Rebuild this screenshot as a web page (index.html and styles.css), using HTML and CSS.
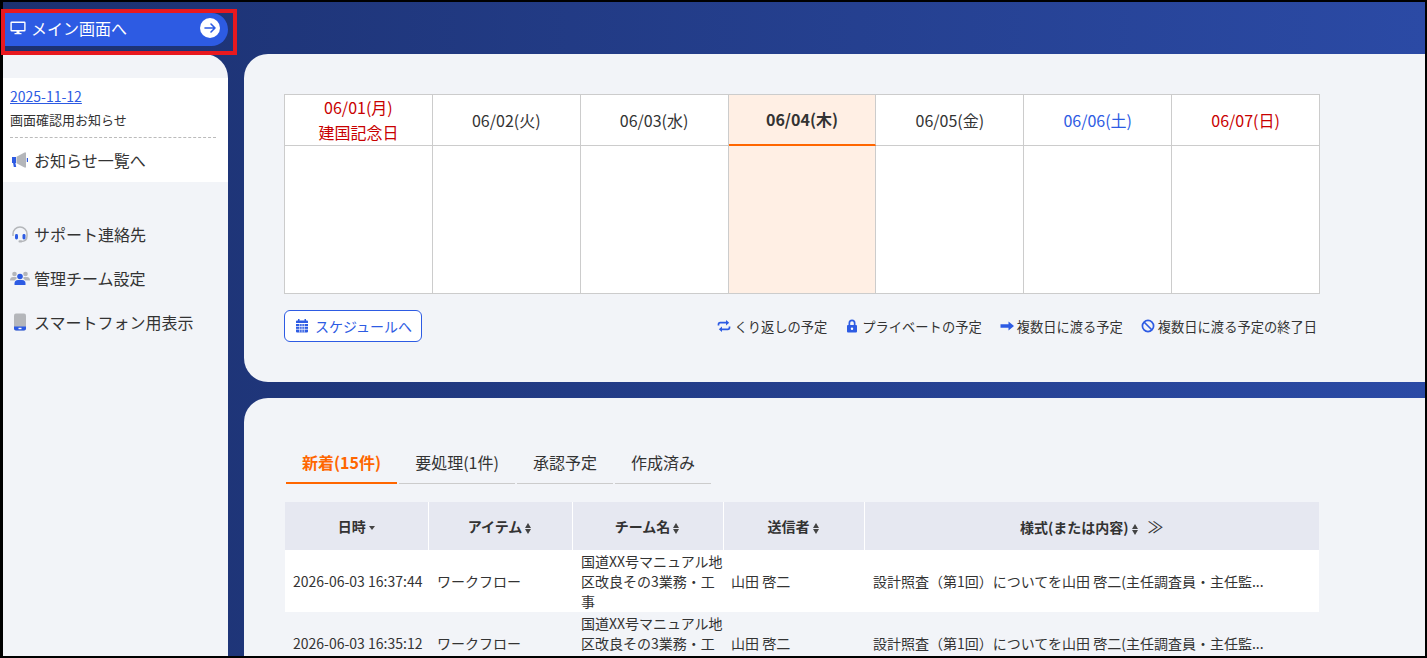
FILE: index.html
```html
<!DOCTYPE html>
<html lang="ja">
<head>
    <meta charset="UTF-8">
    <meta name="viewport" content="width=device-width, initial-scale=1.0">
    <title>メイン画面</title>
    <link rel="stylesheet" href="styles.css">
</head>
<body>
    <div class="page">
        <header class="topbar">
            <a class="main-link" href="#">
                <svg class="main-icon" viewBox="0 0 16 16"><path fill="none" stroke="#fff" stroke-width="1.4" d="M1.7 2.200h12.600a.6.6 0 0 1 .6.6v7.400a.6.6 0 0 1-.6.6H1.700a.6.6 0 0 1-.6-.6V2.800a.6.6 0 0 1 .6-.6z"/><path fill="#fff" d="M6.500 11h3v2h2v1.200h-7V13h2z"/></svg>
                <span class="main-text">メイン画面へ</span>
                <span class="main-arrow">
                    <svg viewBox="0 0 20 20"><path fill="none" stroke="#2d5be3" stroke-width="1.6" stroke-linecap="round" stroke-linejoin="round" d="M5 10h10M11 6l4 4-4 4"/></svg>
                </span>
            </a>
            <div class="highlight"></div>
        </header>
        <div class="content">
            <aside class="sidebar">
                <div class="notice-box">
                    <a class="notice-date" href="#">2025-11-12</a>
                    <p class="notice-title">画面確認用お知らせ</p>
                    <a class="notice-all" href="#">
                        <svg class="side-icon" viewBox="0 0 20 20"><path fill="#2d5be3" d="M2 7h4v6H5.400l.8 4H3.800l-.7-4H2z"/><path fill="#b4b6ba" d="M6.500 6.800 14.500 2.500h1.500v15h-1.500l-8-4.300z"/><path fill="#2d5be3" d="M16.800 8H18v4h-1.200z"/></svg>
                        <span>お知らせ一覧へ</span>
                    </a>
                </div>
                <ul class="side-menu">
                    <li class="side-item">
                        <svg class="side-icon" viewBox="0 0 20 20"><path fill="none" stroke="#b4b6ba" stroke-width="1.500" d="M3 12V10a7 7 0 0 1 14 0v2M17 12q0 5.500-6 5.500"/><rect x="5" y="10" width="3" height="5.500" rx="1.400" fill="#2d5be3"/><rect x="12.500" y="10" width="3" height="5.500" rx="1.400" fill="#2d5be3"/><rect x="8.500" y="16.300" width="3.500" height="2.200" rx="1" fill="#b4b6ba"/></svg>
                        <span>サポート連絡先</span>
                    </li>
                    <li class="side-item">
                        <svg class="side-icon" viewBox="0 0 20 20"><circle cx="4.500" cy="6" r="2.300" fill="#b4b6ba"/><circle cx="15.500" cy="6" r="2.300" fill="#b4b6ba"/><path fill="#b4b6ba" d="M0 12.500q0-3.500 3-3.500h3l1 1-2.500 2.500zM20 12.500q0-3.500-3-3.500h-3l-1 1 2.500 2.500z"/><circle cx="10" cy="8.500" r="2.800" fill="#2d5be3"/><path fill="#2d5be3" d="M4.500 17v-1.500q0-3.500 3.500-3.500h4q3.500 0 3.500 3.500V17z"/></svg>
                        <span>管理チーム設定</span>
                    </li>
                    <li class="side-item">
                        <svg class="side-icon" viewBox="0 0 20 20"><rect x="4" y="1.500" width="12" height="17" rx="2" fill="#b4b6ba"/><path fill="#2d5be3" d="M4 14.500h12v2a2 2 0 0 1-2 2H6a2 2 0 0 1-2-2z"/><rect x="8.500" y="15.800" width="3" height="1.400" fill="#fff"/></svg>
                        <span>スマートフォン用表示</span>
                    </li>
                </ul>
            </aside>
            <main class="main">
                <section class="panel panel-schedule">
                    <div class="week">
                        <div class="day-head holiday"><span>06/01(月)</span><span>建国記念日</span></div>
                        <div class="day-head">06/02(火)</div>
                        <div class="day-head">06/03(水)</div>
                        <div class="day-head today">06/04(木)</div>
                        <div class="day-head">06/05(金)</div>
                        <div class="day-head sat">06/06(土)</div>
                        <div class="day-head sun">06/07(日)</div>
                        <div class="day-cell"></div>
                        <div class="day-cell"></div>
                        <div class="day-cell"></div>
                        <div class="day-cell today-cell"></div>
                        <div class="day-cell"></div>
                        <div class="day-cell"></div>
                        <div class="day-cell"></div>
                    </div>
                    <div class="schedule-foot">
                        <a class="schedule-btn" href="#">
                            <svg class="btn-icon" viewBox="0 0 14 14"><path fill="#2d5be3" d="M3 0h1.500v1.500h5V0H11v1.500h1q1 0 1 1V4H1V2.500q0-1 1-1h1zM1 5h12v7.500q0 1-1 1H2q-1 0-1-1z"/><path stroke="#fff" stroke-width=".7" d="M1 7.500h12M1 10.300h12M4.700 5v8.500M7 5v8.500M9.300 5v8.500"/></svg>
                            <span>スケジュールへ</span>
                        </a>
                        <ul class="legend">
                            <li class="legend-item">
                                <svg class="legend-icon" viewBox="0 0 14 14"><path fill="none" stroke="#2d5be3" stroke-width="1.700" d="M1.500 6.500V5.500q0-1.800 1.800-1.800h7M12.500 7.500v1q0 1.800-1.800 1.800h-7"/><path fill="#2d5be3" d="M9 1l3.200 2.700L9 6.400zM5 7.600v5.400l-3.200-2.700z"/></svg>
                                <span>くり返しの予定</span>
                            </li>
                            <li class="legend-item">
                                <svg class="legend-icon" viewBox="0 0 14 14"><path fill="#2d5be3" fill-rule="evenodd" d="M3.500 6V4a3.500 3.500 0 0 1 7 0v2h.5q1 0 1 1v5.500q0 1-1 1H3q-1 0-1-1V7q0-1 1-1zM5.200 6h3.600V4a1.800 1.800 0 0 0-3.600 0z"/><circle cx="7" cy="9.700" r="1.200" fill="#fff"/></svg>
                                <span>プライベートの予定</span>
                            </li>
                            <li class="legend-item">
                                <svg class="legend-icon" viewBox="0 0 14 14"><path fill="#2d5be3" d="M.5 5.300h8V2.500L14 7l-5.500 4.500V8.700h-8z"/></svg>
                                <span>複数日に渡る予定</span>
                            </li>
                            <li class="legend-item">
                                <svg class="legend-icon" viewBox="0 0 14 14"><circle cx="7" cy="7" r="5.600" fill="none" stroke="#2d5be3" stroke-width="1.700"/><path stroke="#2d5be3" stroke-width="1.700" d="M3 3l8 8"/></svg>
                                <span>複数日に渡る予定の終了日</span>
                            </li>
                        </ul>
                    </div>
                </section>
                <section class="panel panel-list">
                    <nav class="tabs">
                        <a class="tab tab-active" href="#">新着(15件)</a>
                        <a class="tab tab-2" href="#">要処理(1件)</a>
                        <a class="tab tab-3" href="#">承認予定</a>
                        <a class="tab tab-4" href="#">作成済み</a>
                    </nav>
                    <table class="list">
                        <colgroup>
                            <col class="col-date"><col class="col-item"><col class="col-team"><col class="col-sender"><col class="col-form">
                        </colgroup>
                        <thead>
                            <tr>
                                <th>日時<span class="sort-down"></span></th>
                                <th>アイテム<span class="sort"></span></th>
                                <th>チーム名<span class="sort"></span></th>
                                <th>送信者<span class="sort"></span></th>
                                <th>様式(または内容)<span class="sort"></span><span class="more">≫</span></th>
                            </tr>
                        </thead>
                        <tbody>
                            <tr>
                                <td>2026-06-03 16:37:44</td>
                                <td class="cell-wide">ワークフロー</td>
                                <td class="cell-wide team">国道XX号マニュアル地区改良その3業務・工事</td>
                                <td>山田 啓二</td>
                                <td class="cell-wide">設計照査（第1回）についてを山田 啓二(主任調査員・主任監...</td>
                            </tr>
                            <tr class="row-alt">
                                <td>2026-06-03 16:35:12</td>
                                <td class="cell-wide">ワークフロー</td>
                                <td class="cell-wide team">国道XX号マニュアル地区改良その3業務・工事</td>
                                <td>山田 啓二</td>
                                <td class="cell-wide">設計照査（第1回）についてを山田 啓二(主任調査員・主任監...</td>
                            </tr>
                        </tbody>
                    </table>
                </section>
            </main>
        </div>
    </div>
</body>
</html>
```

FILE: styles.css
```css
* {
    margin: 0;
    padding: 0;
    box-sizing: border-box;
}

html, body {
    height: 100%;
    overflow: hidden;
}

body {
    font-family: "Noto Sans CJK JP", "Noto Sans", sans-serif;
    color: #333;
}

a {
    text-decoration: none;
}

ul {
    list-style: none;
}

.page {
    height: 658px;
    border: solid #000;
    border-width: 2px 2px 2px 3px;
    background: linear-gradient(90deg, #1c3170, #2b4aa5);
    position: relative;
}

.topbar {
    height: 52px;
    padding-top: 11px;
}

.main-link {
    width: 225px;
    height: 33px;
    padding: 0 8px 3px 7px;
    display: flex;
    align-items: center;
    background-color: #2d5be3;
    border-radius: 0 17px 17px 0;
    color: #fff;
    font-size: 16px;
}

/* red marker drawn over the screenshot */
.highlight {
    position: absolute;
    left: -2px;
    top: 7px;
    width: 236px;
    height: 46px;
    border: 4px solid #e8191f;
}

.main-icon {
    width: 16px;
    height: 16px;
    margin-right: 5px;
}

.main-text {
    flex: 1;
}

.main-arrow {
    width: 20px;
    height: 20px;
    border-radius: 50%;
    background-color: #fff;
    display: flex;
}

.content {
    height: 602px;
    display: flex;
    gap: 16px;
    overflow: hidden;
}

.sidebar {
    width: 225px;
    padding-top: 24px;
    background-color: #f2f4f8;
    border-radius: 0 24px 0 0;
    flex-shrink: 0;
}

.notice-box {
    background-color: #fff;
    height: 104px;
    padding: 8px 12px 0 7px;
}

.notice-date {
    display: block;
    color: #2d5be3;
    font-size: 14px;
    line-height: 20px;
    text-decoration: underline;
}

.notice-title {
    font-size: 13px;
    line-height: 28px;
    padding-bottom: 3px;
    border-bottom: 1px dashed #bbb;
}

.notice-all,
.side-item {
    display: flex;
    align-items: center;
    gap: 4px;
    color: #333;
    font-size: 16px;
}

.notice-all {
    margin-top: 11px;
    line-height: 22px;
}

.side-menu {
    margin-top: 30px;
    padding-left: 7px;
}

.side-item {
    height: 44px;
}

.side-icon {
    width: 20px;
    height: 20px;
    flex-shrink: 0;
}

.main {
    flex: 1;
    display: flex;
    flex-direction: column;
    gap: 16px;
}

.panel {
    background-color: #f2f4f8;
    padding: 40px 0 0 40px;
}

.panel-schedule {
    height: 328px;
    flex-shrink: 0;
    border-radius: 24px 0 0 24px;
}

.panel-list {
    flex: 1;
    overflow: hidden;
    border-radius: 24px 0 0 0;
}

.week {
    width: 1036px;
    display: grid;
    grid-template-columns: repeat(7, 1fr);
    grid-template-rows: 51px 148px;
    border: solid #ccc;
    border-width: 1px 0 0 1px;
    background-color: #fff;
}

.day-head,
.day-cell {
    border: solid #ccc;
    border-width: 0 1px 1px 0;
}

.day-head {
    display: flex;
    flex-direction: column;
    align-items: center;
    justify-content: center;
    font-size: 16px;
    line-height: 25px;
}

.holiday,
.sun {
    color: #c80000;
}

.sat {
    color: #2d5be3;
}

.today {
    background-color: #ffefe4;
    border-bottom: 2px solid #ff6600;
    font-weight: bold;
}

.today-cell {
    background-color: #ffefe4;
}

.schedule-foot {
    width: 1036px;
    margin-top: 16px;
    display: flex;
    align-items: center;
    justify-content: space-between;
}

.schedule-btn {
    width: 138px;
    height: 32px;
    padding-left: 10px;
    display: flex;
    align-items: center;
    gap: 6px;
    color: #2d5be3;
    font-size: 14px;
    background-color: #fff;
    border: 1px solid #2d5be3;
    border-radius: 6px;
}

.btn-icon {
    width: 14px;
    height: 14px;
}

.legend {
    display: flex;
    gap: 18px;
    padding-right: 3px;
    font-size: 13.28px;
}

.legend-item {
    display: flex;
    align-items: center;
    gap: 3px;
}

.legend-icon {
    width: 14px;
    height: 14px;
}

.tabs {
    display: flex;
    gap: 2px;
    padding-left: 2px;
    margin-top: 7px;
}

.tab {
    height: 39px;
    line-height: 34px;
    text-align: center;
    color: #333;
    font-size: 16px;
    border-bottom: 1px solid #ccc;
    width: 116px;
}

.tab-active {
    width: 111px;
    color: #ff6600;
    font-weight: bold;
    border-bottom: 2px solid #ff6600;
}

.tab-3,
.tab-4 {
    width: 96px;
}

.list {
    width: 1034px;
    margin: 18px 0 0 1px;
    border-collapse: collapse;
    table-layout: fixed;
    font-size: 14px;
}

.col-date { width: 143px; }
.col-item { width: 144px; }
.col-team { width: 151px; }
.col-sender { width: 141px; }

.list th {
    height: 48px;
    background-color: #e6e8f1;
    border-left: 1px solid #fff;
    font-size: 14px;
    font-weight: bold;
}

.list th:first-child {
    border-left: 0;
}

.list td {
    padding: 0 8px;
    height: 62px;
    white-space: nowrap;
    background-color: #fff;
}

.list td.cell-wide {
    padding-left: 9px;
}

.list .row-alt td {
    background-color: #f2f4f8;
}

.list td.team {
    white-space: normal;
    line-height: 20px;
    padding-right: 0;
}

.sort,
.sort-down {
    display: inline-block;
    margin-left: 3px;
    vertical-align: middle;
}

.sort {
    width: 7px;
}

.sort::before,
.sort::after {
    content: "";
    display: block;
    width: 0;
    height: 0;
    border-left: 3.5px solid transparent;
    border-right: 3.5px solid transparent;
}

.sort::before {
    border-bottom: 5px solid #444;
    margin-bottom: 1px;
}

.sort::after {
    border-top: 5px solid #444;
}

.sort-down {
    width: 0;
    height: 0;
    border: 3.5px solid transparent;
    border-top: 4px solid #444;
    border-bottom: 0;
}

.more {
    margin-left: 9px;
    font-size: 16px;
    font-weight: normal;
}
```
